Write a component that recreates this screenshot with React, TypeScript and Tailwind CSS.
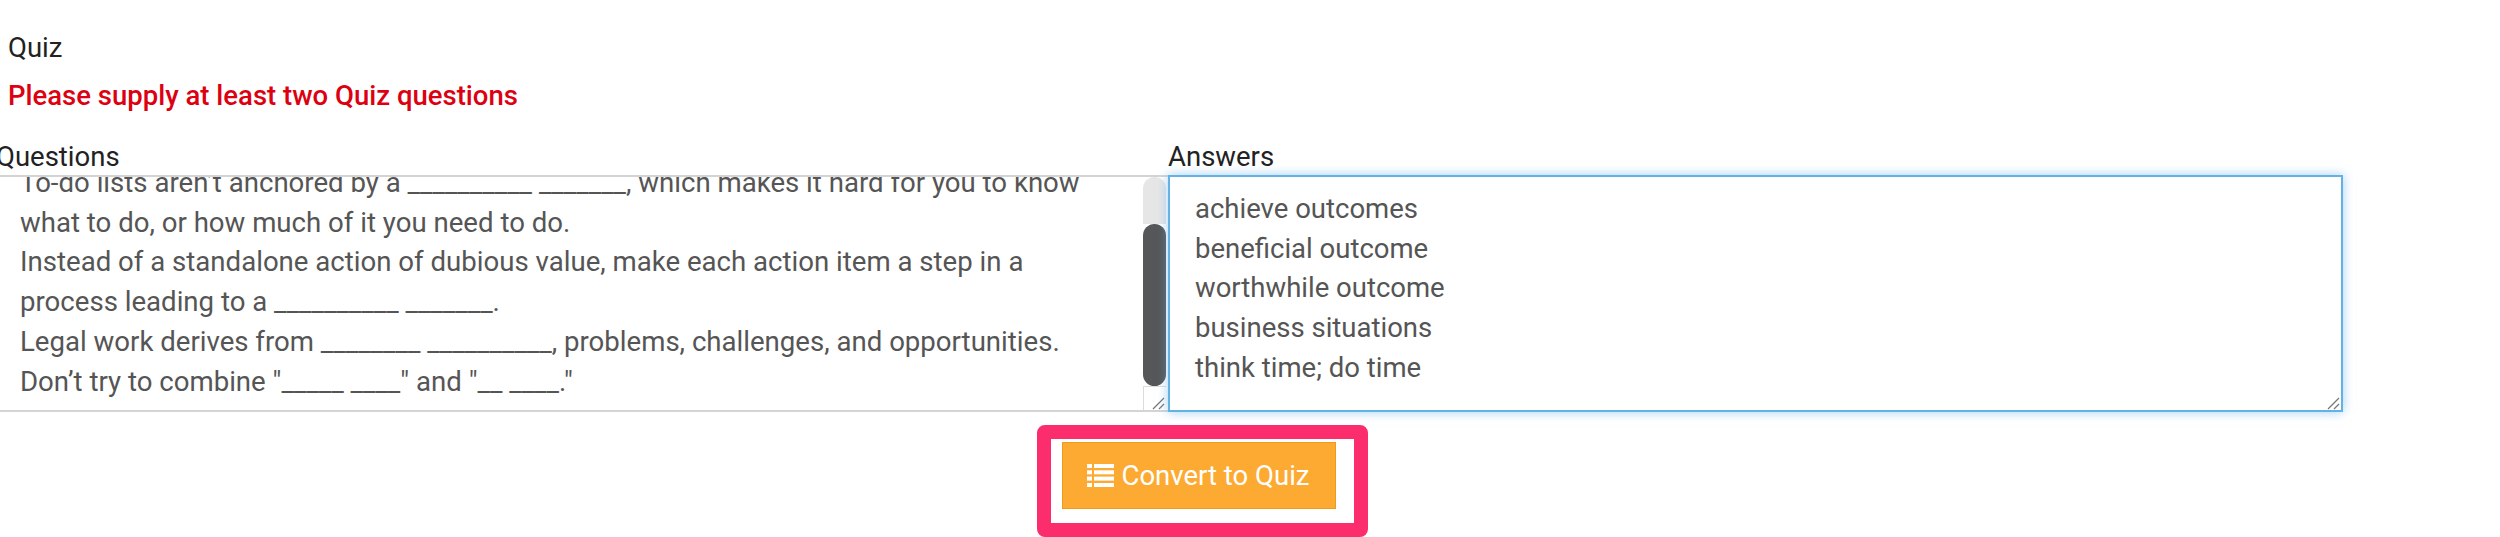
export default function App() {
  const questions = [
    "To-do lists aren’t anchored by a __________ _______, which makes it hard for you to know",
    "what to do, or how much of it you need to do.",
    "Instead of a standalone action of dubious value, make each action item a step in a",
    "process leading to a __________ _______.",
    "Legal work derives from ________ __________, problems, challenges, and opportunities.",
    "Don’t try to combine \"_____ ____\" and \"__ ____.\"",
  ];
  const answers = ["achieve outcomes", "beneficial outcome", "worthwhile outcome", "business situations", "think time; do time"];
  const Grip = () => (
    <svg width="14" height="14" viewBox="0 0 14 14" className="block" fill="none" stroke="#777" strokeWidth="1.2">
      <path d="M1 13 L12 2" />
      <path d="M7 13 L12 8" />
    </svg>
  );
  return (
    <div className="w-[2500px] h-[537px] overflow-hidden bg-white font-['Roboto',sans-serif]">
      <div className="pl-2 pt-[32px] text-[27.5px] leading-[32px] text-[#222]">Quiz</div>
      <div className="pl-2 pt-[16px] text-[27.5px] leading-[32px] font-medium text-[#dd0011]">Please supply at least two Quiz questions</div>
      <div className="flex h-[63px] pt-[29px] text-[27.5px] leading-[32px] text-[#222]">
        <div className="w-[1172px] -ml-[4px]">Questions</div>
        <div>Answers</div>
      </div>
      <div className="flex h-[237px]">
        <div className="w-[1168px] flex border-y-2 border-[#d4d4d4] overflow-hidden">
          <div className="flex-1 pl-[20px] -mt-[14px] text-[27.6px] leading-[39.7px] text-[#555] whitespace-nowrap">
            {questions.map((q) => (
              <div key={q}>{q}</div>
            ))}
          </div>
          <div className="w-[25px] flex flex-col pr-[2px]">
            <div className="h-[47px] w-[23px] rounded-t-full bg-[#e6e6e6]"></div>
            <div className="h-[162px] w-[23px] rounded-full bg-[#555759]"></div>
            <div className="flex-1 w-[23px] border-l border-t border-[#dcdcdc] flex items-end justify-end">
              <Grip />
            </div>
          </div>
        </div>
        <div className="w-[1175px] border-2 border-[#62b2e4] shadow-[0_0_10px_rgba(102,175,233,0.6)] pl-[25px] pt-[12px] text-[27.5px] leading-[39.7px] text-[#555] relative">
          {answers.map((a) => (
            <div key={a}>{a}</div>
          ))}
          <div className="absolute right-0 bottom-0">
            <Grip />
          </div>
        </div>
      </div>
      <div className="ml-[1037px] mt-[13px] w-[331px] h-[112px] rounded-[8px] border-[14px] border-[#fb2d6c] bg-white pl-[11px] pt-[3px]">
        <button className="w-[274px] h-[67px] border border-[#f09a1a] bg-[#fdaa33] text-white text-[27.5px] flex items-center justify-center gap-[8px] pr-[2px]">
          <svg width="27" height="23" viewBox="0 0 27 23" fill="#fff">
            <rect x="0" y="0" width="5" height="4" />
            <rect x="7" y="0" width="20" height="4" />
            <rect x="0" y="6.3" width="5" height="4" />
            <rect x="7" y="6.3" width="20" height="4" />
            <rect x="0" y="12.6" width="5" height="4" />
            <rect x="7" y="12.6" width="20" height="4" />
            <rect x="0" y="19" width="5" height="4" />
            <rect x="7" y="19" width="20" height="4" />
          </svg>
          <span>Convert to Quiz</span>
        </button>
      </div>
    </div>
  );
}
